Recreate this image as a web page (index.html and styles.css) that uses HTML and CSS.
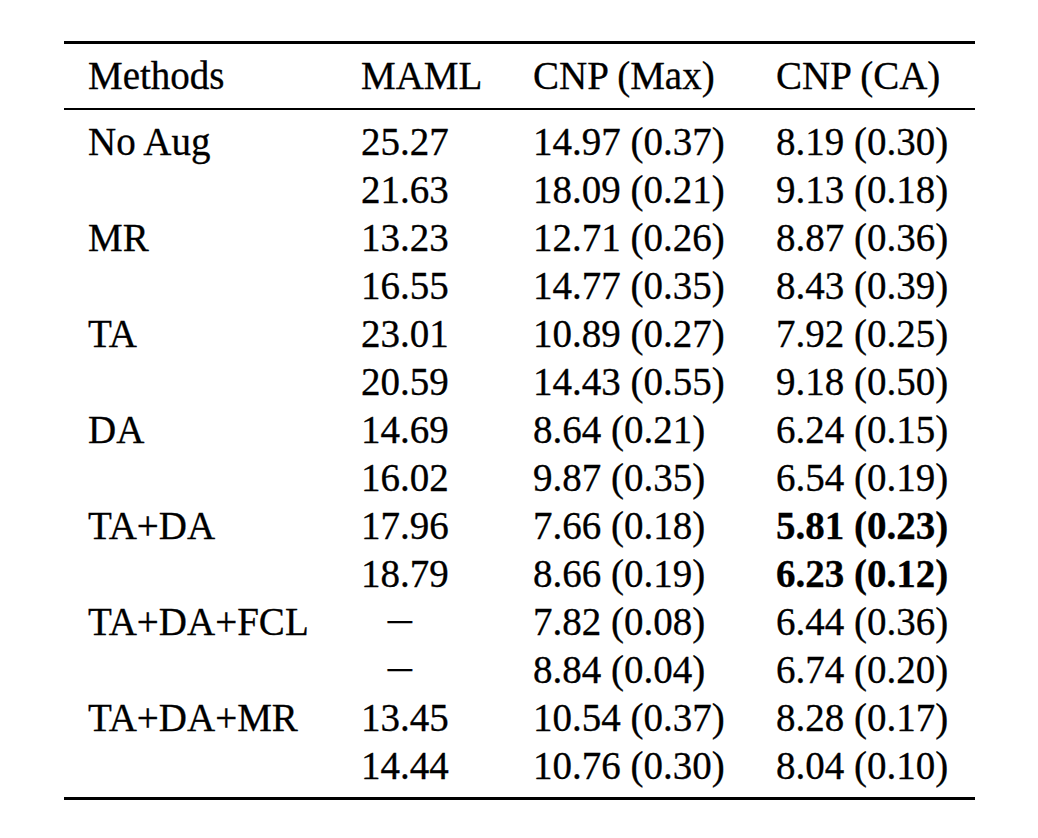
FILE: index.html
```html
<!DOCTYPE html>
<html>
<head>
<meta charset="utf-8">
<link rel="stylesheet" href="styles.css">
</head>
<body>
<div class="page">
<table class="results">
<colgroup>
<col class="c1"><col class="c2"><col class="c3"><col class="c4">
</colgroup>
<thead>
<tr><th>Methods</th><th>MAML</th><th>CNP (Max)</th><th>CNP (CA)</th></tr>
</thead>
<tbody>
<tr class="first"><td>No Aug</td><td>25.27</td><td>14.97 (0.37)</td><td>8.19 (0.30)</td></tr>
<tr><td></td><td>21.63</td><td>18.09 (0.21)</td><td>9.13 (0.18)</td></tr>
<tr><td>MR</td><td>13.23</td><td>12.71 (0.26)</td><td>8.87 (0.36)</td></tr>
<tr><td></td><td>16.55</td><td>14.77 (0.35)</td><td>8.43 (0.39)</td></tr>
<tr><td>TA</td><td>23.01</td><td>10.89 (0.27)</td><td>7.92 (0.25)</td></tr>
<tr><td></td><td>20.59</td><td>14.43 (0.55)</td><td>9.18 (0.50)</td></tr>
<tr><td>DA</td><td>14.69</td><td>8.64 (0.21)</td><td>6.24 (0.15)</td></tr>
<tr><td></td><td>16.02</td><td>9.87 (0.35)</td><td>6.54 (0.19)</td></tr>
<tr><td>TA+DA</td><td>17.96</td><td>7.66 (0.18)</td><td class="best">5.81 (0.23)</td></tr>
<tr><td></td><td>18.79</td><td>8.66 (0.19)</td><td class="best">6.23 (0.12)</td></tr>
<tr><td>TA+DA+FCL</td><td class="dash"><span class="minus">&minus;</span></td><td>7.82 (0.08)</td><td>6.44 (0.36)</td></tr>
<tr><td></td><td class="dash"><span class="minus">&minus;</span></td><td>8.84 (0.04)</td><td>6.74 (0.20)</td></tr>
<tr><td>TA+DA+MR</td><td>13.45</td><td>10.54 (0.37)</td><td>8.28 (0.17)</td></tr>
<tr class="last"><td></td><td>14.44</td><td>10.76 (0.30)</td><td>8.04 (0.10)</td></tr>
</tbody>
</table>
</div>
</body>
</html>
```

FILE: styles.css
```css
html, body {
  margin: 0;
  padding: 0;
  background: #ffffff;
}

.page {
  padding: 41px 0 0 64px;
}

.results {
  width: 911px;
  table-layout: fixed;
  border-collapse: collapse;
  border-spacing: 0;
  font-family: "Liberation Serif", "Times New Roman", serif;
  font-size: 39px;
  line-height: 48px;
  color: #000000;
  -webkit-text-stroke: 0.3px #000000;
  border-top: 3px solid #000000;
  border-bottom: 3px solid #000000;
}

.c1 { width: 297px; }
.c2 { width: 172px; }
.c3 { width: 243px; }
.c4 { width: 199px; }

.results th,
.results td {
  padding: 0;
  text-align: left;
  font-weight: normal;
  white-space: nowrap;
  vertical-align: baseline;
}

.results th:first-child,
.results td:first-child {
  padding-left: 24px;
}

.results thead th {
  padding-top: 8px;
  padding-bottom: 8px;
  border-bottom: 2px solid #000000;
}

.results tbody tr.first td {
  padding-top: 8px;
}

.results tbody tr.last td {
  padding-bottom: 7px;
}

.results td.dash {
  padding-left: 24px;
}

.minus {
  display: inline-block;
  transform: scaleX(1.35);
  transform-origin: left center;
}

.results td.best {
  font-weight: bold;
}
```
